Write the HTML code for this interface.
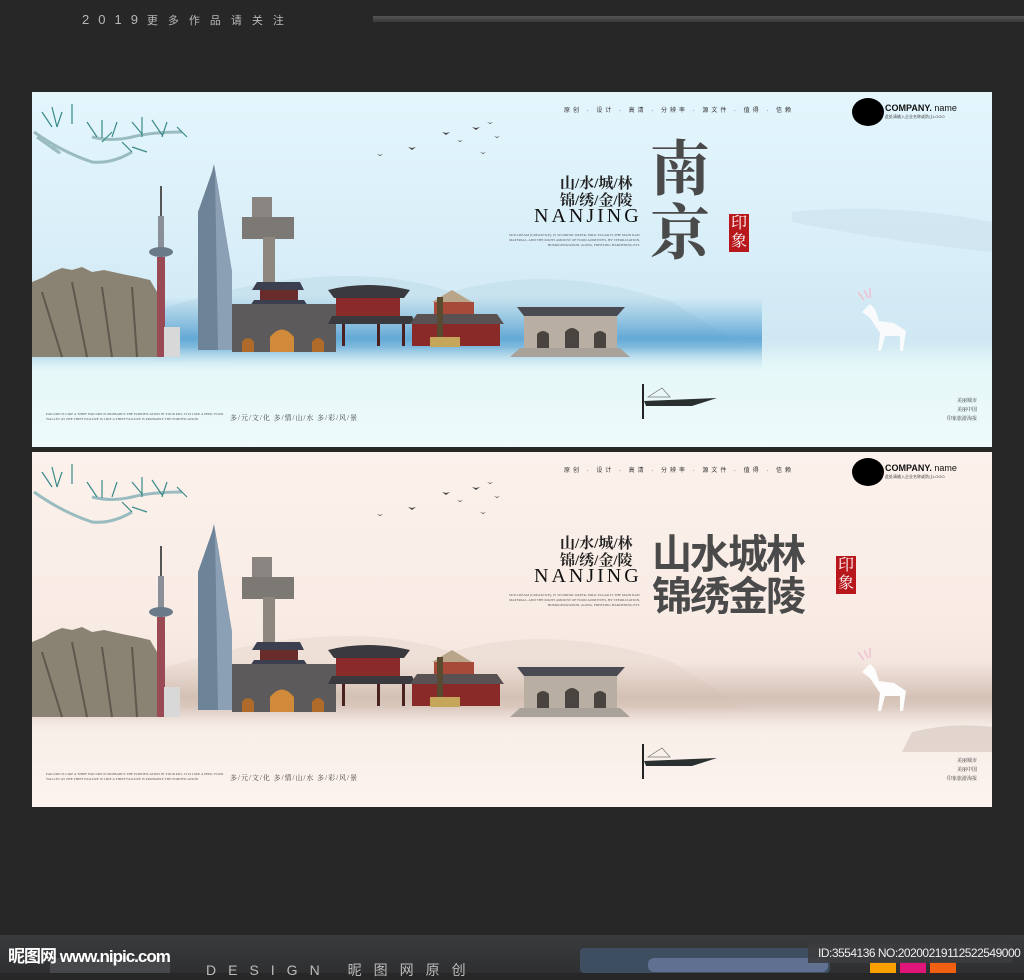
<!DOCTYPE html>
<html><head><meta charset="utf-8"><style>
*{margin:0;padding:0;box-sizing:border-box}
body{width:1024px;height:973px;background:#272727;position:relative;overflow:hidden;font-family:"Liberation Sans","Noto Sans CJK SC",sans-serif}
.top{position:absolute;left:82px;top:12px;color:#b8b8b8;font-size:13px;letter-spacing:9px}
.bar{position:absolute;left:373px;top:16px;width:651px;height:6px;background:linear-gradient(#555,#3a3a3a)}
.panel{position:absolute;left:32px;width:960px;height:355px;overflow:hidden}
.p1{top:92px;background:linear-gradient(180deg,#e4f6fc 0%,#d8eef8 45%,#cfe8f3 70%,#e6f8f8 80%,#ecf9fb 100%)}
.p2{top:452px;background:linear-gradient(180deg,#fcf1ec 0%,#f8ebe4 50%,#efe2da 70%,#f9eee8 80%,#fcf3ef 100%)}
.abs{position:absolute}
.serif{font-family:"Liberation Serif","Noto Serif CJK SC",serif}
.nav{left:532px;top:13px;font-size:6px;color:#333;letter-spacing:3px;white-space:nowrap}
.logo{left:820px;top:6px;width:32px;height:28px;background:#000;border-radius:50%}
.cn{left:853px;top:11px;font-size:9px;font-weight:bold;color:#111}
.cn span{font-weight:normal}
.cns{left:853px;top:22px;font-size:4px;color:#444}
.slog{left:528px;top:84px;font-size:15px;line-height:17px;color:#222;letter-spacing:0px;font-weight:bold}
.nj{left:502px;top:113px;font-size:20px;letter-spacing:3px;color:#111}
.small{font-size:3.5px;color:#555;line-height:5px}
.stamp{background:#b8171c;color:#fff;font-size:16px;line-height:18px;width:20px;text-align:center;padding:1px 0}
.foot{left:198px;top:321px;font-size:7px;color:#444;letter-spacing:1px}
.right3{left:905px;top:305px;font-size:5px;color:#333;line-height:9px;text-align:right;width:40px}
</style></head><body>
<div class="top">2019<span style="font-size:11px;letter-spacing:10px">更多作品请关注</span></div>
<div class="bar"></div>

<!-- PANEL 1 -->
<div class="panel p1">
<svg class="abs" style="left:0;top:0" width="960" height="355">
<defs>
<linearGradient id="mist1" x1="0" y1="0" x2="0" y2="1"><stop offset="0" stop-color="#5ea7d4" stop-opacity="0"/><stop offset=".55" stop-color="#4b9bd0" stop-opacity=".8"/><stop offset="1" stop-color="#e6f8f8" stop-opacity="1"/></linearGradient>
<linearGradient id="low1" x1="0" y1="0" x2="0" y2="1"><stop offset="0" stop-color="#e6f8f8" stop-opacity="0"/><stop offset=".3" stop-color="#e6f8f8"/><stop offset="1" stop-color="#eefafb"/></linearGradient>
</defs>
<path d="M120 220 Q300 160 420 200 Q520 170 640 210 L720 260 L120 270Z" fill="#c0dcea" opacity=".6"/>
<path d="M760 120 Q860 110 960 130 L960 160 Q860 150 760 130Z" fill="#cde3ee" opacity=".7"/>
<rect x="0" y="205" width="730" height="75" fill="url(#mist1)"/>
<rect x="0" y="255" width="960" height="100" fill="url(#low1)"/>
<!-- pine -->
<g stroke="#3a8a8a" stroke-width="1.2" fill="none">
<path d="M2 40 Q30 60 60 70 Q80 72 100 60 M5 45 Q40 70 20 55 M60 45 Q80 50 100 45 Q120 40 150 40" stroke="#9abcc0" stroke-width="3"/>
<path d="M10 20 l10 15 M20 15 l5 20 M30 20 l-5 15 M40 12 l0 20 M55 30 l10 15 M70 28 l0 18 M85 30 l-5 15 M100 30 l10 12 M110 25 l0 20 M120 28 l10 15 M135 30 l-5 15 M145 35 l10 10 M90 50 l10 10 M100 55 l15 5 M80 40 l-10 10"/>
</g>
<path d="M0 190 L12 185 L20 180 L30 176 L40 178 L50 175 L60 180 L72 178 L90 182 L105 185 L118 188 L125 200 L128 265 L0 265Z" fill="#8a8273"/>
<path d="M10 200 L30 265 M40 190 L55 265 M70 195 L80 265 M100 195 L105 265" stroke="#5e584e" stroke-width="2"/>
<rect x="128" y="94" width="2" height="30" fill="#555"/>
<rect x="126" y="124" width="6" height="40" fill="#8a8f98"/>
<ellipse cx="129" cy="160" rx="12" ry="5" fill="#6a7a88"/>
<rect x="125" y="165" width="8" height="100" fill="#9a4a55"/>
<rect x="132" y="235" width="16" height="30" fill="#d8d8d8"/>
<path d="M166 120 L180 80 L182 72 L186 95 L200 180 L200 258 L166 258Z" fill="#6d8398"/>
<path d="M183 80 L200 180 L200 258 L186 258Z" fill="#8ba0b4"/>
<rect x="220" y="105" width="20" height="30" fill="#8a8580"/>
<rect x="210" y="125" width="52" height="22" fill="#7c7873"/>
<rect x="231" y="145" width="12" height="50" fill="#8d8780"/>
<path d="M225 190 L268 190 L272 198 L220 198Z" fill="#3b3f50"/>
<rect x="228" y="198" width="38" height="10" fill="#6a2b2b"/>
<path d="M222 208 L272 208 L276 214 L218 214Z" fill="#3b3f50"/>
<rect x="200" y="212" width="104" height="48" fill="#5c5a5a"/>
<path d="M238 260 L238 245 Q250 230 262 245 L262 260Z" fill="#d08a3a"/>
<path d="M210 260 L210 250 Q216 242 222 250 L222 260Z" fill="#b06a2a"/>
<path d="M280 260 L280 250 Q286 242 292 250 L292 260Z" fill="#b06a2a"/>
<path d="M296 198 Q335 188 378 198 L372 206 L302 206Z" fill="#3a3a3e"/>
<rect x="304" y="206" width="64" height="18" fill="#8a2a2a"/>
<path d="M300 224 L380 224 L384 232 L296 232Z" fill="#3a3a3e"/>
<rect x="310" y="232" width="3" height="22" fill="#4a2020"/><rect x="345" y="232" width="3" height="22" fill="#4a2020"/><rect x="370" y="232" width="3" height="22" fill="#4a2020"/>
<path d="M400 210 L420 198 L440 210Z" fill="#b9a58a"/>
<rect x="402" y="210" width="40" height="12" fill="#a74a3a"/>
<path d="M385 222 L465 222 L472 232 L378 232Z" fill="#5a5252"/>
<rect x="380" y="232" width="88" height="22" fill="#8a2a28"/>
<rect x="405" y="205" width="6" height="40" fill="#5a4a30"/>
<rect x="398" y="245" width="30" height="10" fill="#c6a65a"/>
<path d="M485 215 L593 215 L585 224 L492 224Z" fill="#4a4a52"/>
<rect x="492" y="224" width="93" height="32" fill="#b8afa2"/>
<path d="M505 256 L505 242 Q511 236 517 242 L517 256Z M533 256 L533 240 Q540 232 547 240 L547 256Z M562 256 L562 242 Q568 236 574 242 L574 256Z" fill="#4a4440"/>
<path d="M478 265 L598 265 L588 256 L488 256Z" fill="#a8a29a"/>
<g fill="#444"><path d="M376 55 l4 3 l4-3 l-4 1z"/><path d="M410 40 l4 3 l4-3 l-4 1z"/><path d="M425 48 l3 2 l3-2 l-3 1z"/><path d="M440 35 l4 3 l4-3 l-4 1z"/><path d="M455 30 l3 2 l3-2 l-3 1z"/><path d="M462 44 l3 2 l3-2 l-3 1z"/><path d="M448 60 l3 2 l3-2 l-3 1z"/><path d="M345 62 l3 2 l3-2 l-3 1z"/></g>
<path d="M830 220 l8 -8 l5 5 l4 12 l15 2 l12 8 l-3 20 l-3 0 l0 -15 l-15 0 l-4 15 l-3 0 l2 -18 l-10 -15z" fill="#fbfbfb" opacity=".95"/>
<path d="M832 198 l4 8 M838 196 l0 10 M826 200 l6 8" stroke="#f0c0d0" stroke-width="1.5"/>
<path d="M612 309 L685 306 L660 314 L614 314Z" fill="#2a3030"/>
<rect x="610" y="292" width="2" height="35" fill="#222"/>
<path d="M616 305 L630 296 L638 305Z" fill="none" stroke="#777" stroke-width=".7"/>
</svg>
<div class="abs nav">原创 · 设计 · 高清 · 分辨率 · 源文件 · 值得 · 信赖</div>
<div class="abs logo"></div>
<div class="abs cn">COMPANY. <span>name</span></div>
<div class="abs cns">此处请输入企业名称或防止LOGO</div>
<div class="abs slog serif">山/水/城/林<br>锦/绣/金/陵</div>
<div class="abs nj serif">NANJING</div>
<div class="abs small serif" style="left:470px;top:141px;width:138px;text-align:right">SUR CREAM (CREAM ICE), IS TO DRINK WATER, MILK SUGAR IS THE MAIN RAW MATERIAL, AND THE RIGHT AMOUNT OF FOOD ADDITIVES, BY STERILIZATION, HOMOGENIZATION, AGING, FREEZING HARDENING ETC</div>
<div class="abs serif" style="left:618px;top:46px;font-size:60px;line-height:64px;color:#4a4a4a;font-weight:bold">南<br>京</div>
<div class="abs stamp serif" style="left:697px;top:122px">印象</div>
<div class="abs small serif" style="left:14px;top:320px;width:180px">FAILURE IS LIKE A THIEF FAILURE IS PROBABLY THE FORTIFICATION IN YOUR PILL IT IS LIKE A PEEK YOUR WALLET AS THE THIEF FAILURE IS LIKE A THIEF FAILURE IS PROBABLY THE FORTIFICATION</div>
<div class="abs foot serif">多/元/文/化 多/情/山/水 多/彩/风/景</div>
<div class="abs right3 serif">美丽城市<br>美丽中国<br>印象旅游海报</div>
</div>

<!-- PANEL 2 -->
<div class="panel p2">
<svg class="abs" style="left:0;top:0" width="960" height="355">
<defs>
<linearGradient id="mist2" x1="0" y1="0" x2="0" y2="1"><stop offset="0" stop-color="#c8b0a4" stop-opacity="0"/><stop offset=".5" stop-color="#c4ada0" stop-opacity=".6"/><stop offset="1" stop-color="#f8ede8" stop-opacity="1"/></linearGradient>
<linearGradient id="low2" x1="0" y1="0" x2="0" y2="1"><stop offset="0" stop-color="#f9efe9" stop-opacity="0"/><stop offset=".3" stop-color="#f9efe9"/><stop offset="1" stop-color="#fcf3ef"/></linearGradient>
</defs>
<path d="M120 220 Q300 160 420 200 Q520 170 640 210 L720 260 L120 270Z" fill="#eadad0" opacity=".6"/>
<rect x="0" y="210" width="960" height="70" fill="url(#mist2)"/>
<rect x="0" y="255" width="960" height="100" fill="url(#low2)"/>
<g stroke="#3a8a8a" stroke-width="1.2" fill="none">
<path d="M2 40 Q30 60 60 70 Q80 72 100 60 M60 45 Q80 50 100 45 Q120 40 150 40" stroke="#9abcc0" stroke-width="3"/>
<path d="M10 20 l10 15 M20 15 l5 20 M30 20 l-5 15 M40 12 l0 20 M55 30 l10 15 M70 28 l0 18 M85 30 l-5 15 M100 30 l10 12 M110 25 l0 20 M120 28 l10 15 M135 30 l-5 15 M145 35 l10 10 M90 50 l10 10 M100 55 l15 5"/>
</g>
<path d="M0 190 L12 185 L20 180 L30 176 L40 178 L50 175 L60 180 L72 178 L90 182 L105 185 L118 188 L125 200 L128 265 L0 265Z" fill="#8a8273"/>
<path d="M10 200 L30 265 M40 190 L55 265 M70 195 L80 265 M100 195 L105 265" stroke="#5e584e" stroke-width="2"/>
<rect x="128" y="94" width="2" height="30" fill="#555"/>
<rect x="126" y="124" width="6" height="40" fill="#8a8f98"/>
<ellipse cx="129" cy="160" rx="12" ry="5" fill="#6a7a88"/>
<rect x="125" y="165" width="8" height="100" fill="#9a4a55"/>
<rect x="132" y="235" width="16" height="30" fill="#d8d8d8"/>
<path d="M166 120 L180 80 L182 72 L186 95 L200 180 L200 258 L166 258Z" fill="#6d8398"/>
<path d="M183 80 L200 180 L200 258 L186 258Z" fill="#8ba0b4"/>
<rect x="220" y="105" width="20" height="30" fill="#8a8580"/>
<rect x="210" y="125" width="52" height="22" fill="#7c7873"/>
<rect x="231" y="145" width="12" height="50" fill="#8d8780"/>
<path d="M225 190 L268 190 L272 198 L220 198Z" fill="#3b3f50"/>
<rect x="228" y="198" width="38" height="10" fill="#6a2b2b"/>
<path d="M222 208 L272 208 L276 214 L218 214Z" fill="#3b3f50"/>
<rect x="200" y="212" width="104" height="48" fill="#5c5a5a"/>
<path d="M238 260 L238 245 Q250 230 262 245 L262 260Z" fill="#d08a3a"/>
<path d="M210 260 L210 250 Q216 242 222 250 L222 260Z" fill="#b06a2a"/>
<path d="M280 260 L280 250 Q286 242 292 250 L292 260Z" fill="#b06a2a"/>
<path d="M296 198 Q335 188 378 198 L372 206 L302 206Z" fill="#3a3a3e"/>
<rect x="304" y="206" width="64" height="18" fill="#8a2a2a"/>
<path d="M300 224 L380 224 L384 232 L296 232Z" fill="#3a3a3e"/>
<rect x="310" y="232" width="3" height="22" fill="#4a2020"/><rect x="345" y="232" width="3" height="22" fill="#4a2020"/><rect x="370" y="232" width="3" height="22" fill="#4a2020"/>
<path d="M400 210 L420 198 L440 210Z" fill="#b9a58a"/>
<rect x="402" y="210" width="40" height="12" fill="#a74a3a"/>
<path d="M385 222 L465 222 L472 232 L378 232Z" fill="#5a5252"/>
<rect x="380" y="232" width="88" height="22" fill="#8a2a28"/>
<rect x="405" y="205" width="6" height="40" fill="#5a4a30"/>
<rect x="398" y="245" width="30" height="10" fill="#c6a65a"/>
<path d="M485 215 L593 215 L585 224 L492 224Z" fill="#4a4a52"/>
<rect x="492" y="224" width="93" height="32" fill="#b8afa2"/>
<path d="M505 256 L505 242 Q511 236 517 242 L517 256Z M533 256 L533 240 Q540 232 547 240 L547 256Z M562 256 L562 242 Q568 236 574 242 L574 256Z" fill="#4a4440"/>
<path d="M478 265 L598 265 L588 256 L488 256Z" fill="#a8a29a"/>
<g fill="#444"><path d="M376 55 l4 3 l4-3 l-4 1z"/><path d="M410 40 l4 3 l4-3 l-4 1z"/><path d="M425 48 l3 2 l3-2 l-3 1z"/><path d="M440 35 l4 3 l4-3 l-4 1z"/><path d="M455 30 l3 2 l3-2 l-3 1z"/><path d="M462 44 l3 2 l3-2 l-3 1z"/><path d="M448 60 l3 2 l3-2 l-3 1z"/><path d="M345 62 l3 2 l3-2 l-3 1z"/></g>
<path d="M830 220 l8 -8 l5 5 l4 12 l15 2 l12 8 l-3 20 l-3 0 l0 -15 l-15 0 l-4 15 l-3 0 l2 -18 l-10 -15z" fill="#fdfdfd"/>
<path d="M832 198 l4 8 M838 196 l0 10 M826 200 l6 8" stroke="#f0c0d0" stroke-width="1.5"/>
<path d="M880 280 Q920 270 960 275 L960 300 L870 300Z" fill="#d8cbc2" opacity=".7"/>
<path d="M612 309 L685 306 L660 314 L614 314Z" fill="#2a3030"/>
<rect x="610" y="292" width="2" height="35" fill="#222"/>
<path d="M616 305 L630 296 L638 305Z" fill="none" stroke="#777" stroke-width=".7"/>
</svg>
<div class="abs nav">原创 · 设计 · 高清 · 分辨率 · 源文件 · 值得 · 信赖</div>
<div class="abs logo"></div>
<div class="abs cn">COMPANY. <span>name</span></div>
<div class="abs cns">此处请输入企业名称或防止LOGO</div>
<div class="abs slog serif">山/水/城/林<br>锦/绣/金/陵</div>
<div class="abs nj serif">NANJING</div>
<div class="abs small serif" style="left:470px;top:141px;width:138px;text-align:right">SUR CREAM (CREAM ICE), IS TO DRINK WATER, MILK SUGAR IS THE MAIN RAW MATERIAL, AND THE RIGHT AMOUNT OF FOOD ADDITIVES, BY STERILIZATION, HOMOGENIZATION, AGING, FREEZING HARDENING ETC</div>
<div class="abs" style="left:620px;top:78px;font-size:40px;line-height:42px;color:#4a4a4a;font-weight:bold;letter-spacing:-2px;font-family:'Noto Sans CJK SC',sans-serif">山水城林<br>锦绣金陵</div>
<div class="abs stamp serif" style="left:804px;top:104px">印象</div>
<div class="abs small serif" style="left:14px;top:320px;width:180px">FAILURE IS LIKE A THIEF FAILURE IS PROBABLY THE FORTIFICATION IN YOUR PILL IT IS LIKE A PEEK YOUR WALLET AS THE THIEF FAILURE IS LIKE A THIEF FAILURE IS PROBABLY THE FORTIFICATION</div>
<div class="abs foot serif">多/元/文/化 多/情/山/水 多/彩/风/景</div>
<div class="abs right3 serif">美丽城市<br>美丽中国<br>印象旅游海报</div>
</div>

<!-- footer -->
<div class="abs" style="left:0;top:935px;width:1024px;height:38px;background:linear-gradient(#3a3b3d,#2e2f31)"></div>
<div class="abs" style="left:50px;top:958px;width:120px;height:15px;background:#47484b"></div>
<div class="abs" style="left:580px;top:948px;width:250px;height:25px;background:#3c4e60;border-radius:4px"></div>
<div class="abs" style="left:648px;top:958px;width:180px;height:14px;background:#607090;border-radius:6px"></div>
<div class="abs" style="left:8px;top:942px;color:#fff;font-size:17px;font-weight:bold;letter-spacing:-1px">昵图网 www.nipic.com</div>
<div class="abs" style="left:206px;top:960px;color:#bbb;font-size:14px;letter-spacing:12px">DESIGN 昵图网原创</div>
<div class="abs" style="left:870px;top:962px;width:26px;height:11px;background:#f7a000"></div>
<div class="abs" style="left:900px;top:962px;width:26px;height:11px;background:#e0157a"></div>
<div class="abs" style="left:930px;top:962px;width:26px;height:11px;background:#f06010"></div>
<div class="abs" style="left:808px;top:943px;width:204px;height:20px;background:rgba(60,60,62,.9)"></div>
<div class="abs" style="left:818px;top:946px;color:#eee;font-size:12px;letter-spacing:-.5px">ID:3554136 NO:20200219112522549000</div>
</body></html>
